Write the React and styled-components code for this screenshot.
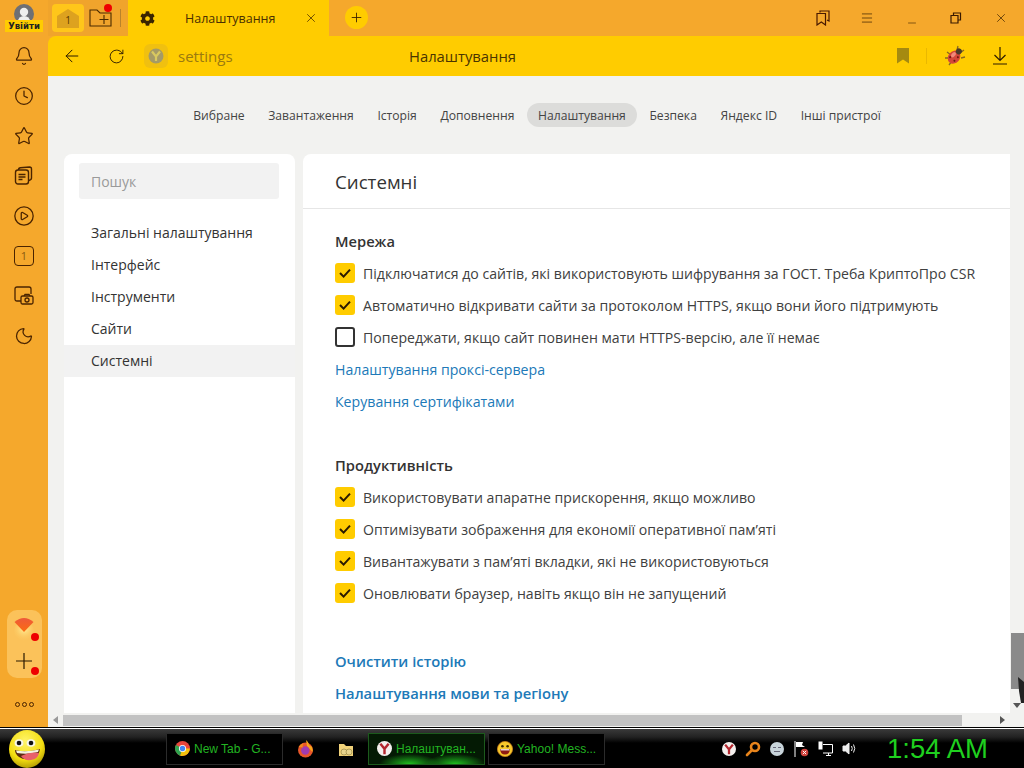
import styled, { createGlobalStyle } from "styled-components";
import { ArrowLeft, Bell, CirclePlay, Clock, Menu, Moon, Plus, RotateCw, Star, X, Minus } from "lucide-react";
import { FaCog } from "react-icons/fa";

const GlobalStyle = createGlobalStyle`
  html, body { margin: 0; padding: 0; background: #000; }
  * { box-sizing: border-box; }
  body { font-family: "Open Sans", "Noto Sans", "Liberation Sans", sans-serif; }
`;

const navItems = ["Вибране", "Завантаження", "Історія", "Доповнення", "Налаштування", "Безпека", "Яндекс ID", "Інші пристрої"];
const menuItems = ["Загальні налаштування", "Інтерфейс", "Інструменти", "Сайти", "Системні"];
const network = [
  ["Підключатися до сайтів, які використовують шифрування за ГОСТ. Треба КриптоПро CSR", true],
  ["Автоматично відкривати сайти за протоколом HTTPS, якщо вони його підтримують", true],
  ["Попереджати, якщо сайт повинен мати HTTPS-версію, але її немає", false],
];
const performance = [
  "Використовувати апаратне прискорення, якщо можливо",
  "Оптимізувати зображення для економії оперативної пам’яті",
  "Вивантажувати з пам’яті вкладки, які не використовуються",
  "Оновлювати браузер, навіть якщо він не запущений",
];

function Option({ text, checked }) {
  return (
    <Row>
      <Check $checked={checked}>
        {checked && (
          <svg width="14" height="12" viewBox="0 0 14 12">
            <path d="M2 6l3.6 3.6L12 2.6" fill="none" stroke="#2b1a00" strokeWidth="2" />
          </svg>
        )}
      </Check>
      <span>{text}</span>
    </Row>
  );
}

function YandexBall({ size = 16 }) {
  return (
    <svg width={size} height={size} viewBox="0 0 16 16">
      <circle cx="8" cy="8" r="8" fill="#f4f0ee" />
      <path d="M3.6 3l4.4 5.4L12.4 3M8 8.4V14" fill="none" stroke="#b3262e" strokeWidth="2.6" />
    </svg>
  );
}

function BigSmiley() {
  return (
    <svg width="38" height="38" viewBox="0 0 38 38">
      <defs>
        <radialGradient id="bigface" cx="0.45" cy="0.3" r="0.8">
          <stop offset="0" stopColor="#fff56a" />
          <stop offset="0.6" stopColor="#f4de10" />
          <stop offset="1" stopColor="#9a8400" />
        </radialGradient>
      </defs>
      <ellipse cx="19" cy="19" rx="18" ry="19" fill="url(#bigface)" />
      <ellipse cx="11" cy="13" rx="4.4" ry="3.8" fill="#f6f6e8" />
      <ellipse cx="23" cy="13" rx="4.4" ry="3.8" fill="#f6f6e8" />
      <circle cx="11" cy="13" r="2.3" fill="#111" />
      <circle cx="23" cy="13" r="2.3" fill="#111" />
      <path d="M7 20q12 3 25-1q-1 7-7 9q-8 3-14-1q-4-3-4-7z" fill="#5a2a10" />
      <path d="M8 20.5q11 2 23-1l-1 2.5q-10 3-21 1z" fill="#f4f2e0" />
      <path d="M13 26q9-5 18-3q-1 6-8 7t-10-4z" fill="#e8606a" />
    </svg>
  );
}

function SmallSmiley() {
  return (
    <svg width="16" height="16" viewBox="0 0 16 16">
      <circle cx="8" cy="8" r="7.6" fill="#f7c92c" stroke="#c9801a" strokeWidth="0.8" />
      <circle cx="5.4" cy="5.2" r="1.3" fill="#3a2a00" />
      <circle cx="10.6" cy="5.2" r="1.3" fill="#3a2a00" />
      <path d="M3 8h10q-.4 5.5-5 5.5T3 8z" fill="#8e1b12" />
      <path d="M3.6 8.2h8.8v1.2H3.6z" fill="#fff" />
    </svg>
  );
}

function ChromeIcon() {
  return (
    <svg width="15" height="15" viewBox="0 0 16 16">
      <circle cx="8" cy="8" r="8" fill="#e8453c" />
      <path d="M8 8L1 4.2A8 8 0 0 0 5.5 15.6z" fill="#2ea44f" />
      <path d="M8 8h7.8A8 8 0 0 1 5.5 15.6z" fill="#f4c20d" />
      <circle cx="8" cy="8" r="3.8" fill="#fff" />
      <circle cx="8" cy="8" r="2.9" fill="#4285f4" />
    </svg>
  );
}

function FirefoxIcon() {
  return (
    <svg width="17" height="18" viewBox="0 0 17 18">
      <circle cx="8.5" cy="10" r="7.5" fill="#e8562a" />
      <path d="M9 0q3 2 3 5l3 2q1 3 .5 5L10 6z" fill="#f7a81b" />
      <circle cx="8.3" cy="10.5" r="4.2" fill="#a13bb0" />
      <path d="M1.5 7q2-3 5-3.4Q5 6 6 7.5z" fill="#f28a1c" />
    </svg>
  );
}

function FolderIcon() {
  return (
    <svg width="18" height="18" viewBox="0 0 18 18">
      <path d="M2 4h5l2 2h7v10H2z" fill="#f1d27a" />
      <circle cx="7" cy="12" r="3" fill="#e8d48c" stroke="#8a7a3a" strokeWidth="0.6" />
      <circle cx="12" cy="12" r="3" fill="#e8d48c" stroke="#8a7a3a" strokeWidth="0.6" />
    </svg>
  );
}

function LadyBug() {
  return (
    <svg width="22" height="22" viewBox="0 0 22 22">
      <g stroke="#8a6a20" strokeWidth="1.3">
        <path d="M3 7l4 3M1 13h5M5 20l3-4M14 1l-1 4M20 5l-4 3M21 12l-4 1" />
      </g>
      <g transform="rotate(40 11 11)">
        <ellipse cx="11" cy="12.5" rx="5.8" ry="7" fill="#d4463a" />
        <circle cx="11" cy="5" r="3" fill="#4a3a2a" />
        <ellipse cx="9" cy="11" rx="1.8" ry="3" fill="#f08a7a" />
        <circle cx="8" cy="15" r="1" fill="#6a1a10" />
        <circle cx="14" cy="10" r="1" fill="#6a1a10" />
        <circle cx="13.6" cy="15" r="1" fill="#6a1a10" />
      </g>
    </svg>
  );
}

export default function App() {
  return (
    <Screen>
      <GlobalStyle />
      <Browser>
        <Rail>
          <Avatar>
            <svg width="20" height="20" viewBox="0 0 20 20">
              <circle cx="10" cy="10" r="10" fill="#6f6f74" />
              <circle cx="10" cy="8" r="4.2" fill="#eee" />
              <path d="M3.5 18q1-6 6.500-6t6.500 6q-3 2-6.500 2t-6.500-2z" fill="#eee" />
            </svg>
            <Login>Увійти</Login>
          </Avatar>
          <RailIcons>
            <RailButton><Bell size={20} strokeWidth={1.5} /></RailButton>
            <RailButton><Clock size={20} strokeWidth={1.5} /></RailButton>
            <RailButton><Star size={20} strokeWidth={1.5} /></RailButton>
            <RailButton>
              <svg width="20" height="20" viewBox="0 0 20 20" fill="none" stroke="currentColor" strokeWidth="1.4">
                <rect x="1.5" y="4" width="13" height="14" rx="2.5" />
                <path d="M4.5 4q0-2 2-2.200l9-.8q2 0 2 2v9q0 2-3 2.500M4.500 8.500h7M4.500 11h7M4.500 13.500h4" />
              </svg>
            </RailButton>
            <RailButton><CirclePlay size={22} strokeWidth={1.4} /></RailButton>
            <RailButton>
              <NumberBox>1</NumberBox>
            </RailButton>
            <RailButton>
              <svg width="20" height="20" viewBox="0 0 20 20" fill="none" stroke="currentColor" strokeWidth="1.3">
                <path d="M7 15H3q-2 0-2-2V3q0-2 2-2h12q2 0 2 2v5" />
                <rect x="7" y="10" width="12" height="8" rx="1.5" fill="#f5a82c" />
                <path d="M10 10l1-1.500h4l1 1.500" />
                <circle cx="13" cy="14" r="2" />
              </svg>
            </RailButton>
            <RailButton><Moon size={20} strokeWidth={1.5} /></RailButton>
          </RailIcons>
          <RailBottom>
            <Pocket>
              <PocketItem>
                <svg width="24" height="28" viewBox="0 0 24 28">
                  <defs>
                    <linearGradient id="wedge" x1="0" y1="0" x2="0" y2="1">
                      <stop offset="0" stopColor="#ee5a3a" />
                      <stop offset="1" stopColor="#fb6c10" />
                    </linearGradient>
                    <radialGradient id="glow" cx="0.5" cy="0.4" r="0.6">
                      <stop offset="0" stopColor="#fff09a" />
                      <stop offset="1" stopColor="#fdc860" stopOpacity="0" />
                    </radialGradient>
                  </defs>
                  <circle cx="12" cy="18" r="10" fill="url(#glow)" />
                  <path d="M2.500 9q9.500-8 19 0l-9.500 10z" fill="url(#wedge)" />
                </svg>
                <RedDot $size={8} />
              </PocketItem>
              <PocketItem>
                <svg width="18" height="18" viewBox="0 0 18 18">
                  <path d="M9 1v16M1 9h16" stroke="#2b1a00" strokeWidth="1.2" />
                </svg>
                <RedDot $size={8} />
              </PocketItem>
            </Pocket>
            <Dots><i /><i /><i /></Dots>
          </RailBottom>
        </Rail>
        <Main>
          <TabStrip>
            <QuickArea>
              <HomeButton>
                <svg width="24" height="20" viewBox="0 0 24 20">
                  <path d="M1 8L12 1l11 7v12H1z" fill="#dda21f" />
                  <text x="12" y="16" textAnchor="middle" fontSize="10" fill="#5a3a00" fontFamily="Open Sans">1</text>
                </svg>
              </HomeButton>
              <FolderButton>
                <svg width="23" height="18" viewBox="0 0 23 18" fill="none" stroke="#4a2a00" strokeWidth="1.1">
                  <path d="M1 17V1h7l3 3h11v13z" />
                  <path d="M15 6v9M10.5 10.5h9" />
                </svg>
                <RedDot $size={8} $top />
              </FolderButton>
              <Divider />
            </QuickArea>
            <ActiveTab>
              <FaCog size={15} color="#3a2400" />
              <TabTitle>Налаштування</TabTitle>
              <X size={14} strokeWidth={1.2} />
            </ActiveTab>
            <NewTab><Plus size={15} strokeWidth={1.4} /></NewTab>
            <WindowButtons>
              <WindowButton>
                <svg width="14" height="16" viewBox="0 0 14 16" fill="none" stroke="#4a1a00" strokeWidth="1.2">
                  <path d="M4 2.500V1h9v10l-2-1M1 3.500h8.500V15l-4.200-3L1 15z" />
                </svg>
              </WindowButton>
              <WindowButton><Menu size={14} strokeWidth={1.2} /></WindowButton>
              <WindowButton><MinimizeIcon size={12} strokeWidth={1.2} /></WindowButton>
              <WindowButton>
                <svg width="12" height="12" viewBox="0 0 12 12" fill="none" stroke="#3a1a00" strokeWidth="1.2">
                  <path d="M3.500 3V1h7v7h-2.500M1 3.500h7v7.500H1z" />
                </svg>
              </WindowButton>
              <WindowButton><X size={14} strokeWidth={1.2} /></WindowButton>
            </WindowButtons>
          </TabStrip>
          <AddressBar>
            <BarIcon><ArrowLeft size={20} strokeWidth={1.2} /></BarIcon>
            <BarIcon><RotateCw size={17} strokeWidth={1.3} /></BarIcon>
            <SiteBadge>
              <svg width="16" height="16" viewBox="0 0 16 16">
                <circle cx="8" cy="8" r="7.5" fill="#a59a66" />
                <path d="M4 3.500l4 5 4-5M8 8.500V13" fill="none" stroke="#d8c860" strokeWidth="2.2" />
              </svg>
            </SiteBadge>
            <AddressText>settings</AddressText>
            <AddressTitle>Налаштування</AddressTitle>
            <BarRight>
              <BarSlot $width={46}>
                <svg width="12" height="16" viewBox="0 0 12 16">
                  <path d="M0 0h12v15.500l-6-4-6 4z" fill="#a58a10" />
                </svg>
              </BarSlot>
              <BarDivider />
              <BarSlot $width={42}><LadyBug /></BarSlot>
              <BarSlot $width={48}>
                <svg width="14" height="18" viewBox="0 0 14 18" fill="none" stroke="#2b1a00" strokeWidth="1.2">
                  <path d="M7 0v13M1.500 8L7 13.500 12.500 8M0 17h14" />
                </svg>
              </BarSlot>
            </BarRight>
          </AddressBar>
          <Page>
            <PageInner>
              <Viewport>
                <TopNav>
                  {navItems.map((item) => (
                    <NavItem key={item} $active={item === "Налаштування"}>{item}</NavItem>
                  ))}
                </TopNav>
                <Columns>
                  <SidePanel>
                    <Search>Пошук</Search>
                    <SideMenu>
                      {menuItems.map((item) => (
                        <SideItem key={item} $active={item === "Системні"}>{item}</SideItem>
                      ))}
                    </SideMenu>
                  </SidePanel>
                  <ContentPanel>
                    <PanelTitle>Системні</PanelTitle>
                    <Section $gap={16}>
                      <SectionTitle>Мережа</SectionTitle>
                      {network.map(([text, checked]) => (
                        <Option key={text} text={text} checked={checked} />
                      ))}
                      <LinkRow>Налаштування проксі-сервера</LinkRow>
                      <LinkRow>Керування сертифікатами</LinkRow>
                    </Section>
                    <Section $gap={32}>
                      <SectionTitle>Продуктивність</SectionTitle>
                      {performance.map((text) => (
                        <Option key={text} text={text} checked />
                      ))}
                    </Section>
                    <Section $gap={36}>
                      <LinkRow $strong>Очистити історію</LinkRow>
                      <LinkRow $strong>Налаштування мови та регіону</LinkRow>
                    </Section>
                  </ContentPanel>
                </Columns>
              </Viewport>
              <VScroll>
                <VThumb>
                  <svg width="6" height="26" viewBox="0 0 6 26">
                    <path d="M0 0l6 5v21H3L1 14z" fill="#222" />
                  </svg>
                </VThumb>
                <VArrow />
              </VScroll>
            </PageInner>
            <HScroll>
              <HArrow $left />
              <HThumb />
              <HArrow />
              <Corner />
            </HScroll>
          </Page>
        </Main>
      </Browser>
      <Taskbar>
        <StartButton><BigSmiley /></StartButton>
        <Tasks>
          <Task><ChromeIcon /><TaskLabel>New Tab - G...</TaskLabel></Task>
          <PlainTask $width={38}><FirefoxIcon /></PlainTask>
          <PlainTask $width={38}><FolderIcon /></PlainTask>
          <Task $active><YandexBall size={15} /><TaskLabel>Налаштуван...</TaskLabel></Task>
          <Task><SmallSmiley /><TaskLabel>Yahoo! Mess...</TaskLabel></Task>
        </Tasks>
        <Tray>
          <TrayIcon><YandexBall size={14} /></TrayIcon>
          <TrayIcon>
            <svg width="16" height="16" viewBox="0 0 16 16" fill="none" stroke="#e8841c" strokeWidth="2.6">
              <circle cx="10" cy="6" r="4" />
              <path d="M7 9l-5 5" strokeLinecap="round" />
            </svg>
          </TrayIcon>
          <TrayIcon>
            <svg width="14" height="14" viewBox="0 0 14 14">
              <circle cx="7" cy="7" r="7" fill="#c8d4da" />
              <path d="M3 5.500h3M8 5.500h3M4 9.500h6" stroke="#667" />
            </svg>
          </TrayIcon>
          <TrayIcon>
            <svg width="15" height="16" viewBox="0 0 15 16">
              <path d="M1 0v16" stroke="#fff" />
              <path d="M2 1h7l-1 3 3 2H2z" fill="#fff" />
              <circle cx="10.5" cy="11.5" r="3.8" fill="#d0403a" />
              <path d="M8.800 9.800l3.400 3.400M12.200 9.800l-3.400 3.400" stroke="#fff" />
            </svg>
          </TrayIcon>
          <TrayIcon>
            <svg width="15" height="15" viewBox="0 0 15 15" fill="none" stroke="#fff">
              <path d="M5 3.500h9.500v8.500h-9.500M8 14.500h5M10.500 12v2.500" />
              <rect x="1" y="1" width="3" height="7" fill="#fff" />
            </svg>
          </TrayIcon>
          <TrayIcon>
            <svg width="15" height="15" viewBox="0 0 15 15" fill="none" stroke="#eee">
              <path d="M1 5h2.500L7 2v11l-3.500-3H1z" fill="#eee" />
              <path d="M9.500 5q1.500 2.500 0 5M11.500 3.500q2.500 4 0 8" />
            </svg>
          </TrayIcon>
        </Tray>
        <Time>1:54 AM</Time>
      </Taskbar>
    </Screen>
  );
}

const MinimizeIcon = styled(Minus)`
  transform: translateY(5px);
`;

const Screen = styled.div`
  width: 1024px;
  height: 768px;
  display: flex;
  flex-direction: column;
  overflow: hidden;
  background: #000;
`;

const Browser = styled.div`
  height: 727px;
  display: flex;
  background: #f5a82c;
`;

const Rail = styled.div`
  width: 48px;
  display: flex;
  flex-direction: column;
  align-items: center;
  color: #4a2400;
`;

const Avatar = styled.div`
  height: 36px;
  padding-top: 4px;
  display: flex;
  flex-direction: column;
  align-items: center;
`;

const Login = styled.div`
  margin-top: -4px;
  padding: 0 3px;
  height: 12px;
  background: #ffcc00;
  color: #222;
  font: bold 8.5px/12px "DejaVu Sans", sans-serif;
`;

const RailIcons = styled.div`
  display: flex;
  flex-direction: column;
`;

const RailButton = styled.div`
  width: 48px;
  height: 40px;
  display: flex;
  align-items: center;
  justify-content: center;
`;

const NumberBox = styled.div`
  width: 20px;
  height: 20px;
  border: 1.4px solid #4a2400;
  border-radius: 4px;
  font-size: 11px;
  line-height: 17px;
  text-align: center;
  color: #8a5a10;
`;

const RailBottom = styled.div`
  margin-top: auto;
  display: flex;
  flex-direction: column;
  align-items: center;
  padding-bottom: 20px;
`;

const Pocket = styled.div`
  width: 35px;
  height: 68px;
  border-radius: 10px;
  background: #fbc25a;
  display: flex;
  flex-direction: column;
`;

const PocketItem = styled.div`
  position: relative;
  height: 34px;
  display: flex;
  align-items: center;
  justify-content: center;
  & > div { right: 3px; bottom: 3px; }
`;

const RedDot = styled.div`
  position: absolute;
  width: ${(p) => p.$size}px;
  height: ${(p) => p.$size}px;
  border-radius: 50%;
  background: #ee0000;
  ${(p) => p.$top && "top: -4px; right: 0;"}
`;

const Dots = styled.div`
  margin-top: 24px;
  display: flex;
  gap: 2px;
  i {
    width: 5px;
    height: 5px;
    border: 1.4px solid #4a2400;
    border-radius: 50%;
  }
`;

const Main = styled.div`
  flex: 1;
  min-width: 0;
  display: flex;
  flex-direction: column;
`;

const TabStrip = styled.div`
  height: 36px;
  display: flex;
  align-items: stretch;
  color: #3a2000;
`;

const QuickArea = styled.div`
  width: 80px;
  display: flex;
  align-items: center;
  padding-left: 4px;
  background: #f0a42c;
`;

const HomeButton = styled.div`
  width: 32px;
  height: 28px;
  background: #ffc61a;
  border-radius: 4px;
  display: flex;
  align-items: center;
  justify-content: center;
`;

const FolderButton = styled.div`
  position: relative;
  width: 24px;
  height: 20px;
  margin-left: 4px;
  display: flex;
  align-items: center;
  justify-content: center;
`;

const Divider = styled.div`
  width: 1px;
  height: 18px;
  margin-left: 8px;
  background: #b9832a;
`;

const ActiveTab = styled.div`
  width: 201px;
  background: #ffcc00;
  display: flex;
  align-items: center;
  padding: 0 11px 0 12px;
`;

const TabTitle = styled.div`
  flex: 1;
  margin-left: 30px;
  font-size: 12.5px;
  color: #4a3000;
`;

const NewTab = styled.div`
  width: 23px;
  height: 23px;
  margin: 6px 0 0 16px;
  border-radius: 50%;
  background: #ffcc00;
  display: flex;
  align-items: center;
  justify-content: center;
`;

const WindowButtons = styled.div`
  margin-left: auto;
  display: flex;
  padding-right: 1px;
`;

const WindowButton = styled.div`
  width: 44.5px;
  display: flex;
  align-items: center;
  justify-content: center;
`;

const AddressBar = styled.div`
  position: relative;
  height: 40px;
  display: flex;
  align-items: center;
  padding-left: 2px;
  background: #ffcc00;
  border-radius: 8px 0 0 0;
  color: #2b1a00;
`;

const BarIcon = styled.div`
  width: 44px;
  display: flex;
  justify-content: center;
`;

const SiteBadge = styled.div`
  width: 24px;
  height: 24px;
  margin-left: 6px;
  border-radius: 6px;
  background: #f0c010;
  display: flex;
  align-items: center;
  justify-content: center;
`;

const AddressText = styled.div`
  margin-left: 10px;
  font-size: 15px;
  color: #9a7a10;
`;

const AddressTitle = styled.div`
  position: absolute;
  left: 361px;
  font-size: 14.8px;
  color: #4a3400;
`;

const BarRight = styled.div`
  margin-left: auto;
  display: flex;
  align-items: center;
`;

const BarSlot = styled.div`
  width: ${(p) => p.$width}px;
  display: flex;
  justify-content: center;
`;

const BarDivider = styled.div`
  width: 1px;
  height: 16px;
  margin-right: 7px;
  background: #eab800;
`;

const Page = styled.div`
  flex: 1;
  min-height: 0;
  display: flex;
  flex-direction: column;
  background: #f2f2f0;
`;

const PageInner = styled.div`
  flex: 1;
  min-height: 0;
  display: flex;
`;

const Viewport = styled.div`
  flex: 1;
  min-width: 0;
  overflow: hidden;
  padding-left: 16px;
`;

const TopNav = styled.div`
  height: 78px;
  display: flex;
  align-items: center;
  justify-content: center;
  gap: 1.6px;
`;

const NavItem = styled.div`
  height: 24px;
  padding: 0 11px;
  border-radius: 12px;
  font-size: 12.15px;
  line-height: 25px;
  color: #444;
  background: ${(p) => (p.$active ? "#dcdcda" : "transparent")};
`;

const Columns = styled.div`
  display: flex;
  gap: 8px;
`;

const SidePanel = styled.div`
  width: 231px;
  height: 600px;
  padding-top: 9px;
  background: #fff;
  border-radius: 8px 8px 0 0;
`;

const Search = styled.div`
  width: 200px;
  height: 36px;
  margin-left: 15px;
  padding-left: 12px;
  background: #f2f2f2;
  border-radius: 3px;
  font-size: 14px;
  line-height: 38px;
  color: #9a9a9a;
`;

const SideMenu = styled.div`
  margin-top: 18px;
`;

const SideItem = styled.div`
  height: 32px;
  padding-left: 27px;
  font-size: 14px;
  line-height: 32px;
  color: #333;
  background: ${(p) => (p.$active ? "#f2f2f2" : "transparent")};
`;

const ContentPanel = styled.div`
  width: 707px;
  height: 600px;
  background: #fff;
  border-radius: 8px 0 0 0;
`;

const PanelTitle = styled.div`
  height: 55px;
  padding-left: 32px;
  border-bottom: 1px solid #e6e6e6;
  font-size: 18.7px;
  line-height: 55px;
  color: #333;
`;

const Section = styled.div`
  margin-top: ${(p) => p.$gap}px;
  padding-left: 32px;
`;

const SectionTitle = styled.div`
  height: 32px;
  font-size: 14.7px;
  font-weight: 600;
  line-height: 32px;
  color: #333;
`;

const Row = styled.div`
  height: 32px;
  display: flex;
  align-items: center;
  gap: 8px;
  font-size: 14.1px;
  white-space: nowrap;
  color: #404040;
`;

const Check = styled.div`
  width: 20px;
  height: 20px;
  border-radius: 3px;
  display: flex;
  align-items: center;
  justify-content: center;
  background: ${(p) => (p.$checked ? "#ffcc00" : "#fff")};
  border: ${(p) => (p.$checked ? "none" : "2px solid #333")};
`;

const LinkRow = styled.div`
  height: 32px;
  font-size: ${(p) => (p.$strong ? "14.75px" : "14.15px")};
  font-weight: ${(p) => (p.$strong ? 600 : 400)};
  line-height: ${(p) => (p.$strong ? "32px" : "34px")};
  color: #2079b8;
`;

const VScroll = styled.div`
  width: 14px;
  display: flex;
  flex-direction: column;
  justify-content: flex-end;
`;

const VThumb = styled.div`
  height: 56px;
  margin-left: 1px;
  margin-bottom: 14px;
  background: #8a8a8a;
  display: flex;
  justify-content: flex-end;
  align-items: flex-end;
  svg { margin-bottom: -14px; }
`;

const VArrow = styled.div`
  width: 0;
  height: 0;
  margin: 0 0 5px 3px;
  border-left: 4px solid transparent;
  border-right: 4px solid transparent;
  border-top: 5px solid #555;
`;

const HScroll = styled.div`
  height: 14px;
  display: flex;
  align-items: center;
  background: #f2f2f0;
`;

const HArrow = styled.div`
  width: 0;
  height: 0;
  margin: ${(p) => (p.$left ? "0 5px" : "0 0 0 38px")};
  border-top: 4px solid transparent;
  border-bottom: 4px solid transparent;
  ${(p) => (p.$left ? "border-right: 5px solid #999;" : "border-left: 5px solid #555;")}
`;

const HThumb = styled.div`
  width: 899px;
  height: 11px;
  background: #c2c2c2;
`;

const Corner = styled.div`
  width: 16px;
`;

const Taskbar = styled.div`
  height: 40px;
  margin-top: 1px;
  border-top: 1px solid #fff;
  display: flex;
  align-items: center;
  background: linear-gradient(#3a3a3a 0, #222 8px, #000 14px, #000 100%);
`;

const StartButton = styled.div`
  width: 166px;
  height: 39px;
  padding: 1px 0 0 8px;
  display: flex;
`;

const Tasks = styled.div`
  width: 540px;
  display: flex;
  align-items: center;
  gap: 3px;
`;

const Task = styled.div`
  width: 117px;
  height: 32px;
  padding-left: 8px;
  display: flex;
  align-items: center;
  gap: 4px;
  border: 1px solid ${(p) => (p.$active ? "#1c5a1c" : "#2b2b2b")};
  background: ${(p) =>
    p.$active
      ? "radial-gradient(ellipse 30px 10px at 35% 100%, #1fc01f, transparent), radial-gradient(ellipse 30px 10px at 75% 100%, #1fc01f, transparent), #041a04"
      : "#000"};
`;

const PlainTask = styled.div`
  width: ${(p) => p.$width}px;
  display: flex;
  justify-content: center;
`;

const TaskLabel = styled.div`
  font: 12px "Liberation Sans", sans-serif;
  white-space: nowrap;
  color: #22b422;
`;

const Tray = styled.div`
  width: 181px;
  display: flex;
  align-items: center;
  gap: 8px;
  padding-left: 15px;
`;

const TrayIcon = styled.div`
  width: 16px;
  display: flex;
  justify-content: center;
`;

const Time = styled.div`
  font: 27.5px "Liberation Sans", sans-serif;
  white-space: nowrap;
  color: #1fd01f;
`;
